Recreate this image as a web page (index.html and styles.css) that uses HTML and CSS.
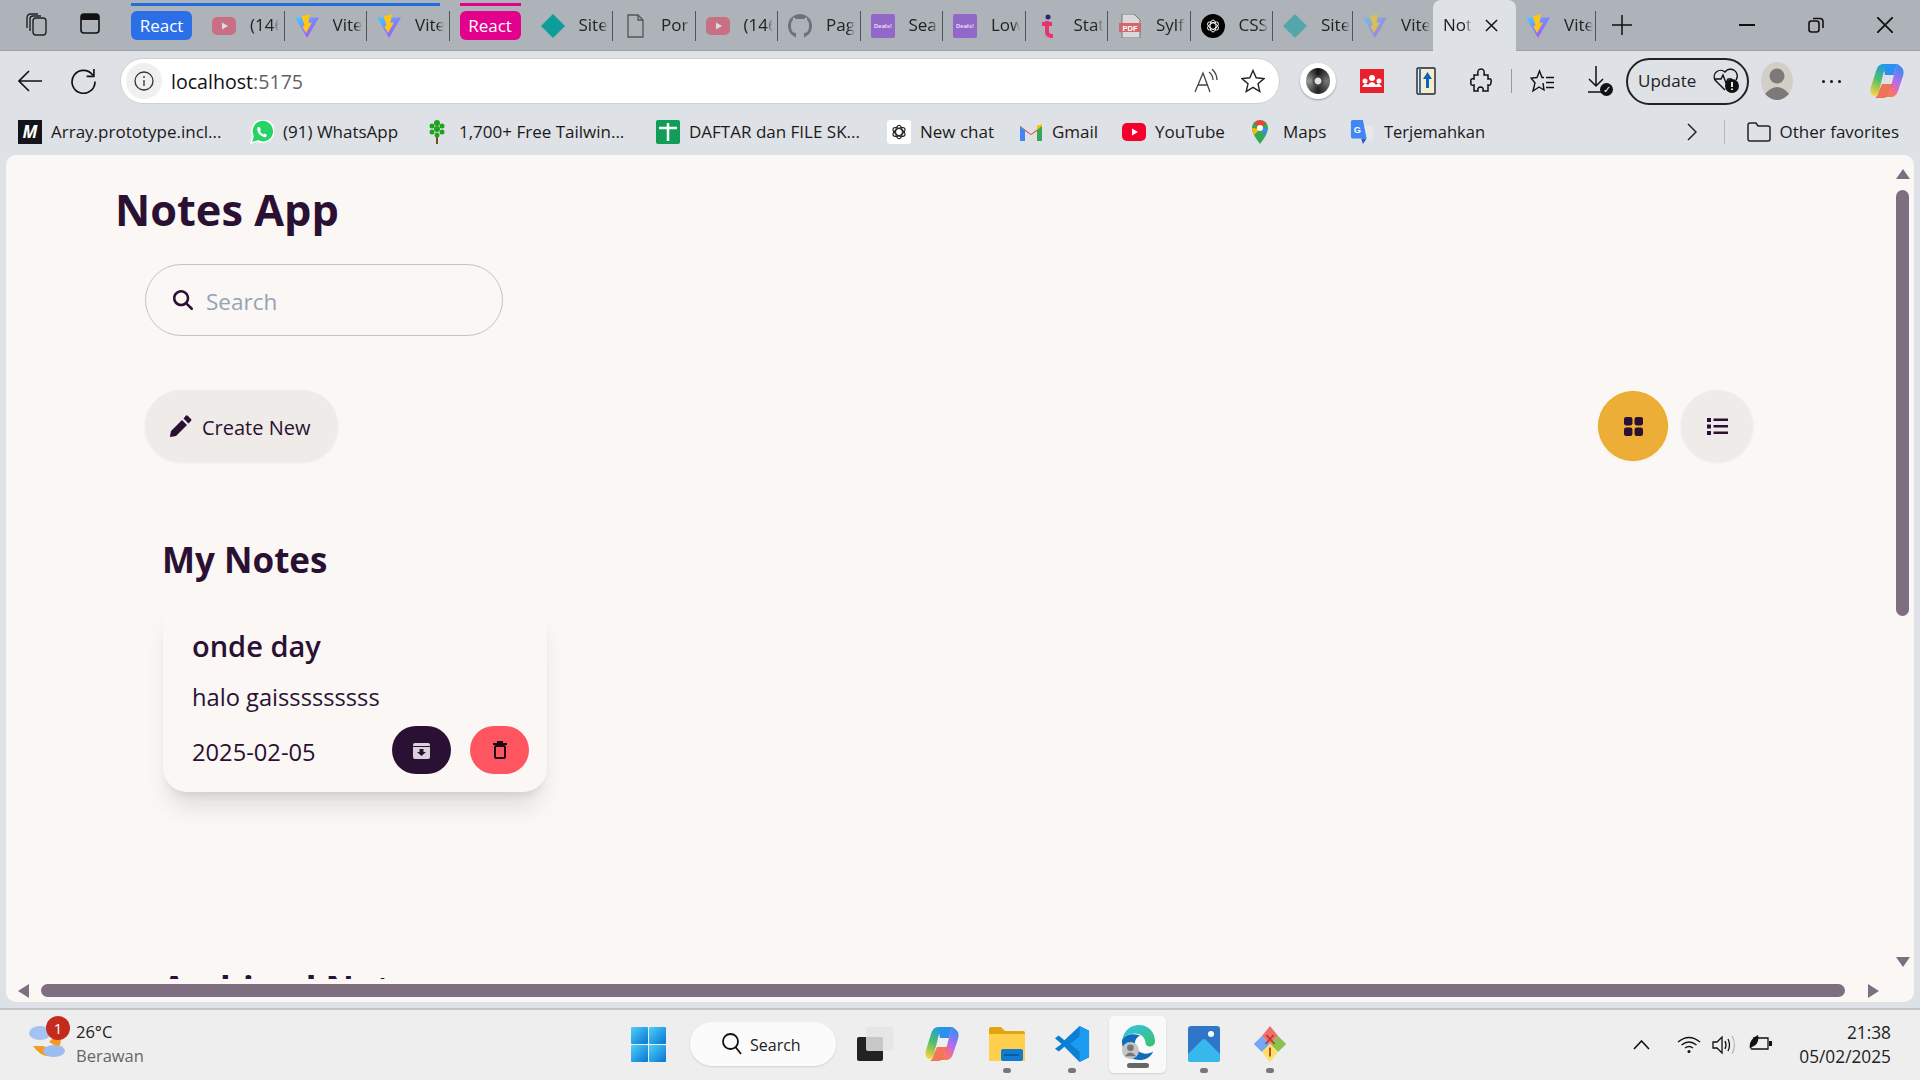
FILE: index.html
```html
<!DOCTYPE html>
<html>
<head>
    <title>Notes App</title>
    <link rel="stylesheet" href="styles.css">
</head>
<body>
    <svg class="defs">
        <defs>
            <linearGradient id="viteGrad" x1="0" y1="0" x2="1" y2="1">
                <stop offset="0" stop-color="#41d1ff"/>
                <stop offset="1" stop-color="#bd34fe"/>
            </linearGradient>
            <linearGradient id="copilotLeft" x1="0.600" y1="0" x2="0.300" y2="1">
                <stop offset="0" stop-color="#1c9be8"/>
                <stop offset=".5" stop-color="#4fbf67"/>
                <stop offset="1" stop-color="#f7d23e"/>
            </linearGradient>
            <linearGradient id="copilotRight" x1="0.700" y1="0" x2="0.300" y2="1">
                <stop offset="0" stop-color="#3a8bf0"/>
                <stop offset=".45" stop-color="#b06cf0"/>
                <stop offset=".75" stop-color="#f06a9a"/>
                <stop offset="1" stop-color="#f9803f"/>
            </linearGradient>
            <linearGradient id="winGrad" x1="0" y1="0" x2="1" y2="1">
                <stop offset="0" stop-color="#4fd0fb"/>
                <stop offset="1" stop-color="#0674d0"/>
            </linearGradient>
            <linearGradient id="edgeGrad" x1="0" y1="0" x2="1" y2="1">
                <stop offset="0" stop-color="#35c1f1"/>
                <stop offset="1" stop-color="#36c46a"/>
            </linearGradient>
            <symbol id="vite" viewBox="0 0 24 24">
                <path d="M0 3.500 L24 3.500 L12 24Z" fill="url(#viteGrad)"/>
                <path d="M15 0 L6.500 2.500 L9.500 11 L7.500 13 L11 19 L17 8.500 L13.500 9Z" fill="#ffc517"/>
            </symbol>
            <symbol id="yt" viewBox="0 0 24 24">
                <rect y="3" width="24" height="18" rx="5" fill="currentColor"/>
                <path d="M10 8.500 L16 12 L10 15.500Z" fill="#fff"/>
            </symbol>
            <symbol id="deals" viewBox="0 0 24 24">
                <rect width="24" height="24" rx="2" fill="#9168c8"/>
                <text x="12" y="14" font-size="6" font-weight="700" text-anchor="middle" fill="#e6dcf5" font-family="Liberation Sans">Deals!</text>
            </symbol>
            <symbol id="gpt" viewBox="0 0 24 24">
                <g fill="none" stroke="currentColor" stroke-width="1.500">
                    <ellipse cx="12" cy="12" rx="4.500" ry="9"/>
                    <ellipse cx="12" cy="12" rx="4.500" ry="9" transform="rotate(60 12 12)"/>
                    <ellipse cx="12" cy="12" rx="4.500" ry="9" transform="rotate(120 12 12)"/>
                </g>
            </symbol>
            <symbol id="copilot" viewBox="0 0 34 36">
                <path d="M21 34 H14 Q18 33 20 27 L25 8 Q26 2 30 3 Q35 6 33 13 L28 28 Q26 34 21 34Z" fill="url(#copilotRight)"/>
                <path d="M13 1 H26 Q29 1 30 3 Q26 2 25 8 L24 12 H15Z" fill="#2f8ff0"/>
                <path d="M13 1 H20 Q16 2 14 8 L9 28 Q8 33 4 33 Q-1 31 1 24 L6 8 Q8 1 13 1Z" fill="url(#copilotLeft)"/>
                <path d="M9 28 L12 21 H23 L20 27 Q18 34 14 35 H5 Q8 33 9 28Z" fill="#f2603c" opacity=".85"/>
            </symbol>
        </defs>
    </svg>

    <header class="tabstrip">
        <div class="strip-btns">
            <svg class="ico-tabs" viewBox="0 0 24 24" fill="none" stroke="#222" stroke-width="1.400"><rect x="9" y="5" width="13" height="17" rx="3" fill="#aeb2b9"/><path d="M6 18 V6 Q6 3 9 3 H17"/><path d="M3 15 V5 Q3 1 7 1 H14"/></svg>
            <svg class="ico-side" viewBox="0 0 20 21"><rect x="1" y="1" width="18" height="19" rx="3" fill="none" stroke="#111" stroke-width="1.600"/><path d="M1 4 Q1 1 4 1 H16 Q19 1 19 4 V7 H1Z" fill="#111"/></svg>
        </div>

        <div class="tabgroup tabgroup-blue">
            <span class="pill pill-blue">React</span>
            <div class="tab"><svg class="tab-ico dim yt-pink"><use href="#yt"/></svg><span class="tab-label">(146</span></div>
            <div class="tab"><svg class="tab-ico"><use href="#vite"/></svg><span class="tab-label">Vite</span></div>
            <div class="tab"><svg class="tab-ico"><use href="#vite"/></svg><span class="tab-label">Vite</span></div>
        </div>
        <div class="tabgroup tabgroup-pink">
            <span class="pill pill-pink">React</span>
            <div class="tab"><svg class="tab-ico" viewBox="0 0 24 24"><path d="M12 0 L24 12 L12 24 L0 12Z" fill="#0d9e9c"/></svg><span class="tab-label">Site</span></div>
        </div>
        <div class="tab"><svg class="tab-ico" viewBox="0 0 24 24" fill="none" stroke="#555" stroke-width="1.300"><path d="M5 1 H15 L20 6 V23 H5Z"/><path d="M15 1 V6 H20"/></svg><span class="tab-label">Por</span></div>
        <div class="tab"><svg class="tab-ico dim yt-pink"><use href="#yt"/></svg><span class="tab-label">(146</span></div>
        <div class="tab"><svg class="tab-ico" viewBox="0 0 24 24"><circle cx="12" cy="12" r="12" fill="#6f7377"/><path d="M8 24 V19 C4 19 3 16 3 11 C3 8 4 7 5 6 V3 L8 5 H16 L19 3 V6 C20 7 21 8 21 11 C21 16 20 19 16 19 V24Z" fill="#aeb2b9"/></svg><span class="tab-label">Pag</span></div>
        <div class="tab"><svg class="tab-ico"><use href="#deals"/></svg><span class="tab-label">Sea</span></div>
        <div class="tab"><svg class="tab-ico"><use href="#deals"/></svg><span class="tab-label">Low</span></div>
        <div class="tab"><svg class="tab-ico" viewBox="0 0 24 24" fill="none"><circle cx="12" cy="3" r="2.500" fill="#2c2570"/><path d="M6 10 H16 M11 7 V18 Q11 22 17 22" stroke="#e8336f" stroke-width="4"/></svg><span class="tab-label">Stat</span></div>
        <div class="tab"><svg class="tab-ico" viewBox="0 0 24 24"><path d="M4 0 H16 L22 6 V24 H4Z" fill="#d9d9d9" stroke="#777"/><rect x="1" y="9" width="22" height="9" fill="#d2686f"/><text x="12" y="16.500" font-size="7.500" font-weight="700" text-anchor="middle" fill="#fff" font-family="Liberation Sans">PDF</text></svg><span class="tab-label">Sylf</span></div>
        <div class="tab"><svg class="tab-ico" viewBox="0 0 24 24"><circle cx="12" cy="12" r="12" fill="#000"/><use href="#gpt" x="4" y="4" width="16" height="16" color="#fff"/></svg><span class="tab-label">CSS</span></div>
        <div class="tab tab-narrow"><svg class="tab-ico dim" viewBox="0 0 24 24"><path d="M12 0 L24 12 L12 24 L0 12Z" fill="#0d9e9c"/></svg><span class="tab-label">Site</span></div>
        <div class="tab tab-narrow tab-sleep"><svg class="tab-ico dim"><use href="#vite"/></svg><span class="tab-label">Vite</span></div>
        <div class="tab-active">
            <span class="tab-label">Not</span>
            <svg class="tab-close" viewBox="0 0 14 14" stroke="#111" stroke-width="1.600"><path d="M1 1 L13 13 M13 1 L1 13"/></svg>
        </div>
        <div class="tab tab-narrow"><svg class="tab-ico"><use href="#vite"/></svg><span class="tab-label">Vite</span></div>
        <svg class="new-tab" viewBox="0 0 20 20" stroke="#111" stroke-width="1.500"><path d="M10 0 V20 M0 10 H20"/></svg>

        <div class="win-controls">
            <svg class="win-min" viewBox="0 0 16 16" stroke="#111" stroke-width="2"><path d="M0 8 H16"/></svg>
            <svg class="win-max" viewBox="0 0 16 16" fill="none" stroke="#111" stroke-width="1.600"><rect x="1" y="4" width="10" height="11" rx="2.500"/><path d="M5 1.500 H12 Q15 1.500 15 4.500 V11"/></svg>
            <svg class="win-x" viewBox="0 0 16 16" stroke="#111" stroke-width="1.800"><path d="M0 0 L16 16 M16 0 L0 16"/></svg>
        </div>
    </header>

    <nav class="toolbar">
        <svg class="t-back" viewBox="0 0 24 22" fill="none" stroke="#111" stroke-width="1.600"><path d="M24 11 H1 M11 1 L1 11 L11 21"/></svg>
        <svg class="t-reload" viewBox="0 0 24 24" fill="none" stroke="#111" stroke-width="1.600"><path d="M21 6 A11 11 0 1 0 23 12"/><path d="M22 0 V7 H15"/></svg>
        <div class="addressbar">
            <span class="info"><svg viewBox="0 0 20 20" fill="none" stroke="#333" stroke-width="1.300"><circle cx="10" cy="10" r="9"/><path d="M10 9 V15 M10 5 V7"/></svg></span>
            <span class="url">localhost<span class="url-port">:5175</span></span>
            <svg class="t-read" viewBox="0 0 24 24" fill="none" stroke="#444" stroke-width="1.300"><path d="M1 23 L9 4 L16 23 M4 16 H14"/><path d="M15 3 Q19 6 19 11 M18 0 Q23 5 23 11"/></svg>
            <svg class="t-star" viewBox="0 0 24 24" fill="none" stroke="#222" stroke-width="1.400"><path d="M12 1.500 L15.200 8.800 L23 9.600 L17 14.800 L18.800 22.500 L12 18.400 L5.200 22.500 L7 14.800 L1 9.600 L8.800 8.800Z"/></svg>
        </div>
        <span class="ext-json"><i></i></span>
        <svg class="ext-mend" viewBox="0 0 24 24"><rect width="24" height="24" fill="#e8202e"/><g fill="#fff"><circle cx="12" cy="9" r="3"/><circle cx="5" cy="12" r="2.500"/><circle cx="19" cy="12" r="2.500"/><path d="M2 18 Q5 12 8 16 Q12 10 16 16 Q19 12 22 18Z"/></g></svg>
        <svg class="ext-book" viewBox="0 0 20 28"><rect x="1" y="1" width="18" height="26" rx="1" fill="#f3ecd0" stroke="#223" stroke-width="1.400"/><path d="M4 1 V27" stroke="#3a6ea5" stroke-width="2"/><path d="M11.500 5 L16 12 H13 V21 H10 V12 H7Z" fill="#0f63b5"/></svg>
        <svg class="ext-puzzle" viewBox="0 0 22 26" fill="none" stroke="#111" stroke-width="1.500"><path d="M4 7 H8 Q7 1 11 1 Q15 1 14 7 H18 V11 Q22 10 21 14 Q21 18 18 17 V23 H13 Q14 19 10 19 Q7 20 8 23 H4 V17 Q0 18 1 14 Q0 10 4 11Z"/></svg>
        <span class="t-sep"></span>
        <svg class="t-favs" viewBox="0 0 24 24" fill="none" stroke="#111" stroke-width="1.400"><path d="M14 8.500 H12 L9.500 2 L7 8.500 L1 9 L5 14 L3 22 L9 18 L14 21 L13 14"/><path d="M16 8.500 H24 M16 13.500 H24 M16 18.500 H24"/></svg>
        <span class="t-dl">
            <svg viewBox="0 0 24 30" fill="none" stroke="#111" stroke-width="1.500"><path d="M8 0 V20 M1 13 L8 20 L15 13 M0 26 H14"/></svg>
            <i class="dl-check">&#10003;</i>
        </span>
        <button class="update-btn">
            <span>Update</span>
            <svg viewBox="0 0 28 26" fill="none" stroke="#111" stroke-width="1.400"><path d="M13 22 L3 12 A6.500 6.500 0 0 1 13 4 A6.500 6.500 0 0 1 24 12"/><path d="M2 11 H9 L11 7 L14 15 L16 11 H20"/><circle cx="20" cy="18" r="7" fill="#111" stroke="none"/><path d="M20 14 V19 M20 20.500 V22" stroke="#fff" stroke-width="1.800"/></svg>
        </button>
        <svg class="t-avatar" viewBox="0 0 32 38"><ellipse cx="16" cy="19" rx="16" ry="19" fill="#d2cfc9"/><circle cx="16" cy="14" r="7.500" fill="#7c7a76"/><path d="M4 32 Q16 18 28 32 Q22 38 16 38 Q10 38 4 32Z" fill="#7c7a76"/></svg>
        <span class="t-more"><i></i><i></i><i></i></span>
        <svg class="t-copilot"><use href="#copilot"/></svg>
    </nav>

    <nav class="bookmarks">
        <a class="bm bm-array"><span class="mdn">M</span>Array.prototype.incl...</a>
        <a class="bm bm-wa"><svg viewBox="0 0 24 24"><path d="M1 23 L3 16 A11 11 0 1 1 8 21Z" fill="#25d366" stroke="#fff" stroke-width="1.500"/><path d="M8 7 Q6 9 9 14 Q13 18 16 17 L17 15 L14.500 13.500 L13.500 14.500 Q11 13.500 10 11 L11 10 L9.500 7Z" fill="#fff"/></svg>(91) WhatsApp</a>
        <a class="bm bm-tree"><svg viewBox="0 0 16 24"><rect x="7" y="16" width="2" height="8" fill="#7a4a1e"/><g fill="#1fa31f"><circle cx="8" cy="3" r="3"/><circle cx="3" cy="6" r="2.500"/><circle cx="13" cy="6" r="2.500"/><circle cx="8" cy="9" r="3"/><circle cx="3" cy="12" r="2.500"/><circle cx="13" cy="12" r="2.500"/><circle cx="8" cy="15" r="2.500"/></g></svg>1,700+ Free Tailwin...</a>
        <a class="bm bm-daftar"><svg viewBox="0 0 24 24"><rect width="24" height="24" rx="2" fill="#0f9d58"/><path d="M3 8 H21 M12 3 V21" stroke="#fff" stroke-width="2.500"/></svg>DAFTAR dan FILE SK...</a>
        <a class="bm bm-chat"><svg viewBox="0 0 24 24"><rect width="24" height="24" rx="3" fill="#fff"/><use href="#gpt" x="3" y="3" width="18" height="18" color="#222"/></svg>New chat</a>
        <a class="bm bm-gmail"><svg viewBox="0 0 22 18"><path d="M0 3 L11 11 L22 3 V18 H17 V8 L11 12 L5 8 V18 H0Z" fill="#ea4335"/><path d="M0 3 V18 H5 V7Z" fill="#4285f4"/><path d="M22 3 V18 H17 V7Z" fill="#34a853"/><path d="M17 7 L22 3 V1 L17 3Z" fill="#fbbc04"/></svg>Gmail</a>
        <a class="bm bm-yt"><svg viewBox="0 0 24 24" color="#f5002c"><use href="#yt"/></svg>YouTube</a>
        <a class="bm bm-maps"><svg viewBox="0 0 18 24"><path d="M9 24 Q1 14 1 8 A8 8 0 0 1 17 8 Q17 14 9 24Z" fill="#34a853"/><path d="M3 3 A8 8 0 0 1 15 3 L9 9Z" fill="#ea4335"/><path d="M1 8 L9 9 L3 15Z" fill="#fbbc04"/><path d="M17 8 L9 9 L14 15Z" fill="#4285f4"/><circle cx="9" cy="8" r="3" fill="#fff"/></svg>Maps</a>
        <a class="bm bm-trans"><svg viewBox="0 0 24 26"><rect x="9" y="6" width="15" height="16" fill="#e8e8e8"/><path d="M0 2 Q0 0 2 0 H13 L17 20 H2 Q0 20 0 18Z" fill="#4285f4"/><text x="7" y="14" font-size="10" font-weight="700" fill="#fff" font-family="Liberation Sans" text-anchor="middle">G</text><path d="M11 20 L13 26 L17 20Z" fill="#2a56c6"/></svg>Terjemahkan</a>
        <svg class="bm-more" viewBox="0 0 10 18" fill="none" stroke="#222" stroke-width="1.500"><path d="M1 1 L9 9 L1 17"/></svg>
        <span class="bm-sep"></span>
        <a class="bm bm-other"><svg viewBox="0 0 24 20" fill="none" stroke="#222" stroke-width="1.500"><path d="M1 3 Q1 1 3 1 H9 L11 4 H21 Q23 4 23 6 V17 Q23 19 21 19 H3 Q1 19 1 17Z"/></svg>Other favorites</a>
    </nav>

    <div class="page-wrap">
        <div class="page">
            <main class="content">
                <h1 class="app-title">Notes App</h1>
                <div class="search-box">
                    <svg viewBox="0 0 512 512"><path d="M416 208c0 45.900-14.900 88.300-40 122.700L502.600 457.400c12.500 12.500 12.500 32.800 0 45.300s-32.800 12.500-45.300 0L330.700 376c-34.400 25.200-76.800 40-122.700 40C93.100 416 0 322.900 0 208S93.100 0 208 0S416 93.100 416 208zM208 352a144 144 0 1 0 0-288 144 144 0 1 0 0 288z"/></svg>
                    <span class="search-ph">Search</span>
                </div>
                <div class="actions">
                    <button class="create-btn">
                        <svg viewBox="0 0 22 22"><path d="M16 0.500 Q17 0 18 1 L21 4 Q22 5 21 6 L18.500 8.500 L13.500 3.500Z M12 5 L17 10 L6 21 L0.500 22 Q0 22 0 21 L1 16Z"/></svg>
                        <span>Create New</span>
                    </button>
                    <div class="view-toggle">
                        <button class="view-btn view-btn-on">
                            <svg viewBox="0 0 18 18"><rect width="8" height="8" rx="2"/><rect x="10" width="8" height="8" rx="2"/><rect y="10" width="8" height="8" rx="2"/><rect x="10" y="10" width="8" height="8" rx="2"/></svg>
                        </button>
                        <button class="view-btn">
                            <svg viewBox="0 0 21 17"><rect width="4" height="4"/><rect y="6.500" width="4" height="4"/><rect y="13" width="4" height="4"/><rect x="6.500" y="0.500" width="14.500" height="2.500"/><rect x="6.500" y="7" width="14.500" height="2.500"/><rect x="6.500" y="13.500" width="14.500" height="2.500"/></svg>
                        </button>
                    </div>
                </div>

                <section class="notes">
                    <h2>My Notes</h2>
                    <article class="note-card">
                        <h3>onde day</h3>
                        <p>halo gaisssssssss</p>
                        <div class="note-foot">
                            <span class="note-date">2025-02-05</span>
                            <div class="note-btns">
                                <button class="btn-archive">
                                    <svg viewBox="0 0 17 17"><path d="M0 3 Q0 1 2 1 H15 Q17 1 17 3 V4 H0Z" fill="#d9d2dc"/><path d="M0 5 H17 V15 Q17 17 15 17 H2 Q0 17 0 15Z" fill="#d9d2dc"/><path d="M6.500 7 H10.500 V10 H13 L8.500 14 L4 10 H6.500Z" fill="#2a1133"/></svg>
                                </button>
                                <button class="btn-delete">
                                    <svg viewBox="0 0 14 18" fill="none" stroke="#1a0a14" stroke-width="2"><path d="M0 3 H14 M4 1 H10"/><rect x="2" y="5" width="10" height="12" rx="1"/></svg>
                                </button>
                            </div>
                        </div>
                    </article>
                </section>

                <section class="notes-archived">
                    <h2>Archived Notes</h2>
                </section>
            </main>

            <div class="vscroll">
                <span class="arr arr-up"></span>
                <span class="vthumb"></span>
                <span class="arr arr-down"></span>
            </div>
            <div class="hscroll">
                <span class="arr arr-left"></span>
                <span class="hthumb"></span>
                <span class="arr arr-right"></span>
            </div>
        </div>
    </div>

    <footer class="taskbar">
        <div class="weather">
            <svg viewBox="0 0 36 40">
                <path d="M4 28 Q12 40 24 38 Q32 36 34 28 Q24 34 14 28Z" fill="#f59a23"/>
                <path d="M30 14 Q34 20 30 30 L20 24Z" fill="#f59a23"/>
                <ellipse cx="11" cy="15" rx="11" ry="7" fill="#a5c3f2"/>
                <ellipse cx="25" cy="33" rx="11" ry="6" fill="#9cbdf0"/>
            </svg>
            <span class="weather-badge">1</span>
            <div class="weather-text">
                <span>26°C</span>
                <span class="weather-sub">Berawan</span>
            </div>
        </div>

        <div class="task-icons">
            <svg class="tb-win" viewBox="0 0 35 35" fill="url(#winGrad)"><rect width="17" height="17" rx="1"/><rect x="18" width="17" height="17" rx="1"/><rect y="18" width="17" height="17" rx="1"/><rect x="18" y="18" width="17" height="17" rx="1"/></svg>
            <div class="tb-search">
                <svg viewBox="0 0 20 22" fill="none" stroke="#111" stroke-width="1.800"><circle cx="8.500" cy="8.500" r="7.500"/><path d="M13.500 14 L19 21"/></svg>
                <span>Search</span>
            </div>
            <svg class="tb-view" viewBox="0 0 36 34"><rect y="10" width="26" height="24" rx="2" fill="#222"/><rect x="9" y="0" width="27" height="24" rx="2" fill="#e4e4e4" opacity=".85"/></svg>
            <svg class="tb-copilot"><use href="#copilot"/></svg>
            <span class="tb-item tb-files">
                <svg viewBox="0 0 36 36"><path d="M0 3 Q0 1 2 1 H12 L16 5 H34 Q36 5 36 7 V34 H0Z" fill="#e2a50f"/><rect y="8" width="36" height="27" fill="#ffd04d"/><rect x="12" y="23" width="22" height="12" rx="2" fill="#0f7bd1"/><rect x="15" y="28" width="15" height="2" fill="#085c9e"/></svg>
                <i class="run-dot"></i>
            </span>
            <span class="tb-item tb-code">
                <svg viewBox="0 0 36 38"><path d="M26 0 L36 5 V33 L26 38 L10 22 L4 27 L0 24 L7 19 L0 13 L4 10 L10 15Z" fill="#0b7fd2"/><path d="M26 0 L36 5 V33 L26 38Z M26 11 L16 19 L26 27Z" fill="#1d9bf0" fill-rule="evenodd"/></svg>
                <i class="run-dot"></i>
            </span>
            <span class="tb-edge">
                <svg viewBox="0 0 36 38"><path d="M1 17 C3 5 11 0 19 0 C29 0 36 8 36 17 C36 24 28 24 26 20 C26 13 21 9 15 9 C8 9 3 12 1 17Z" fill="url(#edgeGrad)"/><path d="M1 17 C1 28 9 38 21 37 C27 37 32 33 34 28 C28 32 17 31 15 22 C14 15 17 13 20 11 C12 8 3 10 1 17Z" fill="#0f6cbd"/><circle cx="10" cy="27" r="9" fill="#c5c5c5"/><circle cx="10" cy="24" r="3.500" fill="#777"/><path d="M4 33 Q10 25 16 33Z" fill="#777"/></svg>
                <i class="run-bar"></i>
            </span>
            <span class="tb-item tb-photos">
                <svg viewBox="0 0 32 36"><rect width="32" height="36" rx="3" fill="#2f76c9"/><circle cx="23" cy="8" r="3" fill="#fff"/><path d="M0 28 L14 14 Q16 12 18 14 L32 28 V33 Q32 36 29 36 H3 Q0 36 0 33Z" fill="#37b9ee"/></svg>
                <i class="run-dot"></i>
            </span>
            <span class="tb-item tb-git">
                <svg viewBox="0 0 36 40"><path d="M9 11 L18 20 L9 29 L0 20Z" fill="#74a8f5"/><path d="M27 11 L36 20 L27 29 L18 20Z" fill="#8cc152"/><path d="M18 20 L27 29 L18 40 L9 29Z" fill="#fbe06a"/><path d="M18 0 L27 11 L18 20 L9 11Z" fill="#ef6f6c"/><path d="M14 10 L23 20 M22 10 L13 20 M18 24 V34" stroke="#c0392b" stroke-width="2"/></svg>
                <i class="run-dot"></i>
            </span>
        </div>

        <div class="tray">
            <svg class="tray-up" viewBox="0 0 17 10" fill="none" stroke="#111" stroke-width="1.600"><path d="M1 9 L8.500 1 L16 9"/></svg>
            <svg class="tray-wifi" viewBox="0 0 24 17" fill="none" stroke="#111" stroke-width="1.300"><path d="M1 6 Q12 -3 23 6 M4.500 9 Q12 3 19.500 9 M8 12 Q12 9 16 12"/><circle cx="12" cy="15.500" r="1.500" fill="#111" stroke="none"/></svg>
            <svg class="tray-vol" viewBox="0 0 24 20" fill="none" stroke="#111" stroke-width="1.300"><path d="M1 7 V13 H5 L10 18 V2 L5 7Z"/><path d="M13 6 Q15 10 13 14 M16 4 Q19 10 16 16"/><path d="M20 1 Q25 10 20 19" stroke="#bbb"/></svg>
            <svg class="tray-batt" viewBox="0 0 24 18" fill="none" stroke="#111" stroke-width="1.300"><path d="M4 3 H19 V14 H2"/><rect x="20" y="6" width="3" height="5" fill="#111" stroke="none"/><path d="M1 14 Q-1 5 9 0 Q11 9 3 12Z" fill="#111" stroke="none"/></svg>
            <div class="clock">
                <span>21:38</span>
                <span>05/02/2025</span>
            </div>
        </div>
    </footer>
</body>
</html>
```

FILE: styles.css
```css
* {
    box-sizing: border-box;
}
html, body {
    margin: 0;
    height: 100%;
}
body {
    width: 1920px;
    height: 1080px;
    overflow: hidden;
    display: flex;
    flex-direction: column;
    font-family: "Open Sans", "Noto Sans", sans-serif;
    color: #1a1a1a;
    background-color: #dee1e6;
}
svg {
    display: block;
    flex: none;
}
button {
    font-family: inherit;
    border: none;
    cursor: pointer;
}
.defs {
    position: absolute;
    width: 0;
    height: 0;
}

/* tab strip */
.tabstrip {
    height: 51px;
    flex: none;
    display: flex;
    align-items: flex-start;
    background-color: #aeb2b9;
    border-bottom: 1px solid #9da1a8;
}
.strip-btns {
    width: 131px;
    flex: none;
    display: flex;
    padding: 13px 0 0 24px;
    gap: 32px;
}
.ico-tabs {
    width: 24px;
    height: 24px;
}
.ico-side {
    width: 20px;
    height: 21px;
}
.tabgroup {
    position: relative;
    display: flex;
    align-items: flex-start;
}
.tabgroup::before {
    content: "";
    position: absolute;
    left: 0;
    top: 3px;
    height: 3px;
}
.tabgroup-blue::before {
    width: 309px;
    background-color: #1f6fe0;
}
.tabgroup-pink {
    padding-left: 10px;
}
.tabgroup-pink::before {
    left: 10px;
    width: 61px;
    background-color: #e3008c;
}
.pill {
    margin: 11px 10px 0 0;
    height: 29px;
    width: 61px;
    border-radius: 6px;
    color: #fff;
    font-size: 17px;
    line-height: 29px;
    text-align: center;
}
.pill-blue {
    background-color: #2a6fe8;
}
.pill-pink {
    background-color: #e3008c;
}
.tab {
    width: 82.5px;
    height: 30px;
    margin-top: 11px;
    flex: none;
    display: flex;
    align-items: center;
    gap: 14px;
    padding-left: 10px;
    border-right: 1.5px solid #50545a;
}
.tab-narrow {
    width: 80px;
}
.tab-ico {
    width: 24px;
    height: 24px;
    flex: none;
}
.tab-label {
    width: 29px;
    margin-bottom: 2px;
    overflow: hidden;
    white-space: nowrap;
    font-size: 17px;
    line-height: 28px;
    color: #222;
    -webkit-mask-image: linear-gradient(to right, #000 75%, transparent);
    mask-image: linear-gradient(to right, #000 75%, transparent);
}
.dim {
    opacity: .55;
}
.yt-pink {
    color: #e0395a;
}
.tab-sleep {
    border-right: none;
}
.tab-active {
    width: 83px;
    height: 51px;
    flex: none;
    display: flex;
    align-items: flex-start;
    padding: 11px 0 0 10px;
    border-radius: 8px 8px 0 0;
    background-color: #dee1e6;
    gap: 13px;
}
.tab-close {
    width: 13px;
    height: 13px;
    margin-top: 8px;
}
.new-tab {
    width: 20px;
    height: 20px;
    margin: 15px 0 0 16px;
}
.win-controls {
    margin-left: auto;
    display: flex;
    align-items: center;
    height: 50px;
    padding-right: 27px;
}
.win-min, .win-max, .win-x {
    width: 16px;
    height: 16px;
}
.win-max {
    margin: 0 53px;
}

/* toolbar */
.toolbar {
    height: 57px;
    flex: none;
    display: flex;
    align-items: center;
    padding: 3px 0 0 18px;
}
.t-back {
    width: 24px;
    height: 22px;
}
.t-reload {
    width: 25px;
    height: 25px;
    margin-left: 29px;
}
.addressbar {
    width: 1160px;
    height: 46px;
    margin-left: 24px;
    display: flex;
    align-items: center;
    padding-left: 5px;
    background-color: #fff;
    border: 1px solid #cfd1d5;
    border-radius: 23px;
}
.info {
    width: 36px;
    height: 36px;
    display: flex;
    align-items: center;
    justify-content: center;
    border-radius: 50%;
    background-color: #f0f0f0;
}
.info svg {
    width: 20px;
    height: 20px;
}
.url {
    margin-left: 9px;
    font-size: 19.600px;
    color: #111;
}
.url-port {
    color: #5f6368;
}
.t-read {
    width: 24px;
    height: 24px;
    margin-left: auto;
}
.t-star {
    width: 24px;
    height: 24px;
    margin: 0 14px 0 23px;
}
.ext-json {
    width: 36px;
    height: 36px;
    margin-left: 20px;
    padding: 5px 6px;
    flex: none;
    border-radius: 50%;
    background-color: #fff;
    box-shadow: 0 1px 2px rgba(0, 0, 0, .3);
}
.ext-json i {
    display: block;
    width: 24px;
    height: 26px;
    border-radius: 50%;
    background: radial-gradient(circle, #e4e4e4 0 16%, #444 22%, transparent 40%), conic-gradient(#111, #777, #222, #999, #111);
}
.ext-mend {
    width: 24px;
    height: 24px;
    margin-left: 24px;
}
.ext-book {
    width: 20px;
    height: 28px;
    margin-left: 32px;
}
.ext-puzzle {
    width: 22px;
    height: 26px;
    margin-left: 34px;
}
.t-sep {
    width: 1px;
    height: 24px;
    margin-left: 19px;
    background-color: #999;
}
.t-favs {
    width: 24px;
    height: 24px;
    margin-left: 18px;
}
.t-dl {
    position: relative;
    margin-left: 34px;
    width: 24px;
    height: 30px;
}
.t-dl svg {
    width: 24px;
    height: 30px;
}
.dl-check {
    position: absolute;
    right: -1px;
    bottom: 0;
    width: 13px;
    height: 13px;
    border-radius: 50%;
    background-color: #111;
    color: #fff;
    font-size: 10px;
    font-style: normal;
    line-height: 13px;
    text-align: center;
}
.update-btn {
    width: 123px;
    height: 47px;
    margin-left: 14px;
    display: flex;
    align-items: center;
    justify-content: space-between;
    padding: 0 7px 0 10px;
    background: transparent;
    border: 2px solid #222;
    border-radius: 24px;
    font-size: 17px;
    color: #222;
}
.update-btn span {
    padding-bottom: 2px;
}
.update-btn svg {
    width: 28px;
    height: 26px;
}
.t-avatar {
    width: 32px;
    height: 38px;
    margin-left: 12px;
}
.t-more {
    display: flex;
    gap: 5px;
    margin-left: 29px;
}
.t-more i {
    width: 3px;
    height: 3px;
    border-radius: 50%;
    background-color: #111;
}
.t-copilot {
    width: 34px;
    height: 36px;
    margin-left: 29px;
}

/* bookmarks */
.bookmarks {
    height: 47px;
    flex: none;
    display: flex;
    align-items: center;
    padding-left: 18px;
    font-size: 17px;
}
.bm {
    flex: none;
    display: flex;
    align-items: center;
    gap: 9px;
    color: #1a1a1a;
    white-space: nowrap;
}
.bm svg {
    width: 24px;
    height: 24px;
}
.mdn {
    width: 24px;
    height: 24px;
    background-color: #15141a;
    color: #fff;
    font-size: 17px;
    font-style: italic;
    font-weight: 700;
    line-height: 24px;
    text-align: center;
}
.bm-array {
    width: 232px;
}
.bm-wa {
    width: 179px;
}
.bm-tree {
    width: 227px;
    gap: 14px;
}
.bm-tree svg {
    width: 16px;
    height: 24px;
}
.bm-daftar {
    width: 231px;
}
.bm-chat {
    width: 133px;
}
.bm-gmail {
    width: 102px;
    gap: 10px;
}
.bm-gmail svg {
    width: 22px;
    height: 18px;
}
.bm-yt {
    width: 129px;
}
.bm-maps {
    width: 99px;
    gap: 14px;
}
.bm-maps svg {
    width: 18px;
    height: 24px;
}
.bm-trans {
    font-size: 16.500px;
    gap: 10px;
}
.bm-more {
    width: 10px;
    height: 18px;
    margin-left: auto;
}
.bm-sep {
    width: 1px;
    height: 24px;
    margin: 0 22px 0 27px;
    background-color: #b5b7bb;
}
.bm-other {
    margin-right: 21px;
}
.bm-other svg {
    width: 24px;
    height: 20px;
}

/* page */
.page-wrap {
    height: 855px;
    flex: none;
    padding: 0 6px 6px;
    background-color: #dee1e6;
    border-bottom: 2px solid #c4c4c4;
}
.page {
    height: 847px;
    display: grid;
    grid-template-columns: 1fr 18px;
    grid-template-rows: 824px 23px;
    background-color: #fbf7f4;
    border-radius: 10px;
    color: #2a1133;
    overflow: hidden;
}
.content {
    overflow: hidden;
    padding: 25px 143px 0 109px;
}
.app-title {
    margin: 0;
    font-size: 43.300px;
    line-height: 60px;
    font-weight: 700;
    color: #2a1133;
}
.search-box {
    width: 358px;
    height: 72px;
    margin: 24px 0 0 30px;
    display: flex;
    align-items: center;
    padding-left: 27px;
    gap: 13px;
    border: 1px solid #c8c2c6;
    border-radius: 36px;
}
.search-box svg {
    width: 20px;
    height: 20px;
    fill: #2a1133;
}
.search-ph {
    padding-top: 2px;
    font-size: 22.500px;
    color: #94a3b8;
}
.actions {
    margin: 54px 0 0 30px;
    display: flex;
    justify-content: space-between;
}
.create-btn {
    width: 193px;
    height: 72px;
    display: flex;
    align-items: center;
    gap: 10px;
    padding: 0 0 0 25px;
    border-radius: 36px;
    background-color: #efebe8;
    color: #2a1133;
    font-size: 20px;
    font-weight: 500;
    box-shadow: 0 1px 3px rgba(0, 0, 0, .06);
}
.create-btn span {
    padding-top: 2px;
}
.create-btn svg {
    width: 22px;
    height: 22px;
    fill: #2a1133;
}
.view-toggle {
    display: flex;
    align-items: center;
    gap: 13px;
}
.view-btn {
    width: 72px;
    height: 72px;
    display: flex;
    align-items: center;
    justify-content: center;
    border-radius: 50%;
    background-color: #efebe8;
    box-shadow: 0 1px 3px rgba(0, 0, 0, .06);
}
.view-btn svg {
    width: 21px;
    height: 17px;
    fill: #2a1133;
}
.view-btn-on {
    width: 70px;
    height: 70px;
    background-color: #edae37;
    border: 1px solid #eca913;
}
.view-btn-on svg {
    width: 19px;
    height: 19px;
}
.notes, .notes-archived {
    margin-left: 47px;
}
.notes h2, .notes-archived h2 {
    margin: 0;
    font-size: 35px;
    line-height: 50px;
    font-weight: 700;
}
.notes {
    padding-top: 73px;
}
.note-card {
    width: 384px;
    height: 192px;
    margin: 15px 0 0 1px;
    padding: 26px 18px 0 29px;
    border-radius: 24px;
    background-color: #fbf7f4;
    box-shadow: 0 20px 25px -5px rgba(0, 0, 0, .1), 0 8px 10px -6px rgba(0, 0, 0, .1);
}
.note-card h3 {
    margin: 0;
    font-size: 29px;
    line-height: 40px;
    font-weight: 600;
}
.note-card p {
    margin: 15px 0 0;
    font-size: 23.700px;
    line-height: 32px;
}
.note-foot {
    display: flex;
    align-items: center;
    justify-content: space-between;
    margin-top: 13px;
    font-size: 23.700px;
}
.note-date {
    padding-top: 4px;
}
.note-btns {
    display: flex;
    gap: 19px;
}
.note-btns button {
    width: 59px;
    height: 48px;
    display: flex;
    align-items: center;
    justify-content: center;
    border-radius: 24px;
}
.btn-archive {
    background-color: #2a1133;
}
.btn-archive svg {
    width: 17px;
    height: 17px;
}
.btn-delete {
    background-color: #ff5561;
}
.btn-delete svg {
    width: 14px;
    height: 18px;
}
.notes-archived {
    margin-top: 172px;
}

/* scrollbars */
.vscroll {
    display: flex;
    flex-direction: column;
    padding-top: 14px;
}
.vthumb {
    width: 13px;
    height: 426px;
    margin-top: 11px;
    border-radius: 7px;
    background-color: #7f6e80;
}
.hscroll {
    grid-column: 1 / 3;
    display: flex;
    align-items: flex-start;
    padding: 5px 0 0 12px;
}
.hthumb {
    width: 1804px;
    height: 13px;
    margin-left: 12px;
    border-radius: 7px;
    background-color: #7f6e80;
}
.arr {
    width: 0;
    height: 0;
    border-style: solid;
    border-color: transparent;
}
.arr-up {
    border-width: 0 7px 10px;
    border-bottom-color: #7f6e80;
}
.arr-down {
    margin-top: auto;
    margin-bottom: 12px;
    border-width: 10px 7px 0;
    border-top-color: #7f6e80;
}
.arr-left {
    border-width: 7px 11px 7px 0;
    border-right-color: #7f6e80;
}
.arr-right {
    margin-left: 23px;
    border-width: 7px 0 7px 11px;
    border-left-color: #7f6e80;
}

/* taskbar */
.taskbar {
    flex: 1;
    display: flex;
    background-color: #eeeeee;
    font-size: 16.500px;
}
.weather {
    position: relative;
    width: 631px;
    flex: none;
    display: flex;
    padding: 8px 0 0 29px;
    gap: 11px;
}
.weather svg {
    width: 36px;
    height: 40px;
}
.weather-badge {
    position: absolute;
    left: 46px;
    top: 6px;
    width: 24px;
    height: 24px;
    border-radius: 50%;
    background-color: #c42b1c;
    color: #fff;
    font-size: 15px;
    line-height: 24px;
    text-align: center;
}
.weather-text {
    display: flex;
    flex-direction: column;
    gap: 2px;
    padding-top: 3px;
    line-height: 22px;
    color: #222;
}
.weather-sub {
    color: #666;
}
.task-icons {
    display: flex;
    align-items: flex-start;
}
.tb-win {
    width: 35px;
    height: 35px;
    margin-top: 17px;
}
.tb-search {
    width: 146px;
    height: 44px;
    margin: 12px 0 0 24px;
    display: flex;
    align-items: center;
    gap: 8px;
    padding-left: 32px;
    border-radius: 22px;
    background-color: #fbfbfb;
    box-shadow: 0 1px 2px rgba(0, 0, 0, .12);
    font-size: 16px;
    color: #222;
}
.tb-search svg {
    width: 20px;
    height: 22px;
}
.tb-search span {
    padding-top: 2px;
}
.tb-view {
    width: 36px;
    height: 34px;
    margin: 17px 0 0 21px;
}
.tb-copilot {
    width: 34px;
    height: 36px;
    margin: 16px 0 0 32px;
}
.tb-item {
    display: flex;
    flex-direction: column;
    align-items: center;
    padding-top: 16px;
}
.tb-item svg {
    width: 36px;
    height: 36px;
}
.run-dot {
    width: 8px;
    height: 5px;
    margin-top: 6px;
    border-radius: 3px;
    background-color: #777;
}
.tb-files {
    margin-left: 30px;
}
.tb-code {
    margin-left: 29px;
}
.tb-edge {
    width: 57px;
    height: 57px;
    margin: 6px 0 0 19px;
    display: flex;
    flex-direction: column;
    align-items: center;
    padding-top: 9px;
    border-radius: 5px;
    background-color: #f9f9f9;
    box-shadow: 0 1px 2px rgba(0, 0, 0, .12);
}
.tb-edge svg {
    width: 36px;
    height: 36px;
}
.run-bar {
    width: 22px;
    height: 5px;
    margin-top: 2px;
    border-radius: 3px;
    background-color: #666;
}
.tb-photos {
    margin-left: 22px;
}
.tb-photos svg {
    width: 32px;
}
.tb-git {
    margin-left: 32px;
}
.tray {
    margin-left: auto;
    display: flex;
    align-items: flex-start;
    padding-right: 29px;
}
.tray-up {
    width: 17px;
    height: 10px;
    margin-top: 30px;
}
.tray-wifi {
    width: 24px;
    height: 17px;
    margin: 26px 0 0 27px;
}
.tray-vol {
    width: 24px;
    height: 20px;
    margin: 25px 0 0 11px;
}
.tray-batt {
    width: 24px;
    height: 18px;
    margin: 25px 0 0 13px;
}
.clock {
    width: 118px;
    display: flex;
    flex-direction: column;
    align-items: flex-end;
    padding-top: 11px;
    font-size: 17.300px;
    line-height: 24px;
    color: #222;
}
```
